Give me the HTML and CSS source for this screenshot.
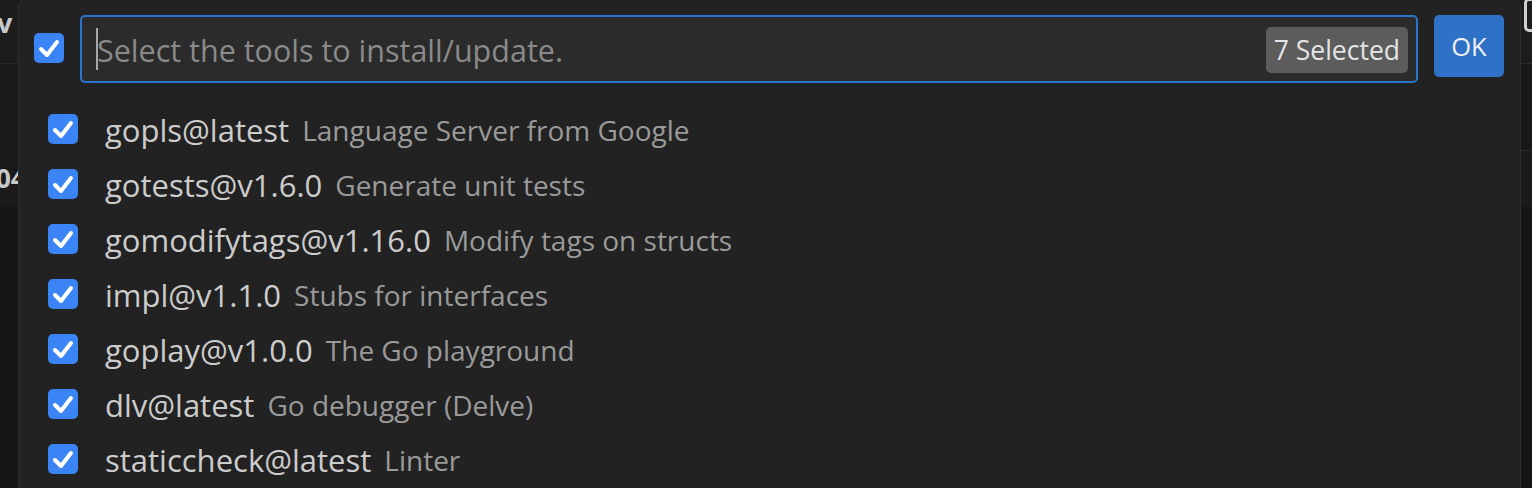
FILE: index.html
```html
<!DOCTYPE html>
<html>
<head>
<meta charset="utf-8">
<link rel="stylesheet" href="styles.css">
</head>
<body>
<div class="page">
  <div class="side side-left">
    <div class="side-top"><span class="frag-v">v</span></div>
    <div class="side-mid"><span class="frag-num">04</span></div>
    <div class="side-bottom"></div>
  </div>

  <div class="quick-pick">
    <div class="header">
      <span class="checkbox header-check">
        <svg viewBox="0 0 30 30"><path d="M7 16 L13 22 L23 9"/></svg>
      </span>
      <div class="input-box">
        <span class="caret"></span>
        <span class="placeholder">Select the tools to install/update.</span>
        <span class="badge">7 Selected</span>
      </div>
      <button class="ok">OK</button>
    </div>

    <ul class="list">
      <li class="row">
        <span class="checkbox"><svg viewBox="0 0 30 30"><path d="M7 16 L13 22 L23 9"/></svg></span>
        <span class="label">gopls@latest</span>
        <span class="desc">Language Server from Google</span>
      </li>
      <li class="row">
        <span class="checkbox"><svg viewBox="0 0 30 30"><path d="M7 16 L13 22 L23 9"/></svg></span>
        <span class="label">gotests@v1.6.0</span>
        <span class="desc">Generate unit tests</span>
      </li>
      <li class="row">
        <span class="checkbox"><svg viewBox="0 0 30 30"><path d="M7 16 L13 22 L23 9"/></svg></span>
        <span class="label">gomodifytags@v1.16.0</span>
        <span class="desc">Modify tags on structs</span>
      </li>
      <li class="row">
        <span class="checkbox"><svg viewBox="0 0 30 30"><path d="M7 16 L13 22 L23 9"/></svg></span>
        <span class="label">impl@v1.1.0</span>
        <span class="desc">Stubs for interfaces</span>
      </li>
      <li class="row">
        <span class="checkbox"><svg viewBox="0 0 30 30"><path d="M7 16 L13 22 L23 9"/></svg></span>
        <span class="label">goplay@v1.0.0</span>
        <span class="desc">The Go playground</span>
      </li>
      <li class="row">
        <span class="checkbox"><svg viewBox="0 0 30 30"><path d="M7 16 L13 22 L23 9"/></svg></span>
        <span class="label">dlv@latest</span>
        <span class="desc">Go debugger (Delve)</span>
      </li>
      <li class="row">
        <span class="checkbox"><svg viewBox="0 0 30 30"><path d="M7 16 L13 22 L23 9"/></svg></span>
        <span class="label">staticcheck@latest</span>
        <span class="desc">Linter</span>
      </li>
    </ul>
  </div>

  <div class="side side-right">
    <div class="side-top"><span class="frag-box"></span></div>
    <div class="side-mid2"></div>
    <div class="side-mid3"></div>
    <div class="side-bottom"></div>
  </div>
</div>
</body>
</html>
```

FILE: styles.css
```css
* { box-sizing: border-box; }
html, body {
  margin: 0;
  padding: 0;
  background: #181818;
  overflow: hidden;
}
body {
  width: 1532px;
  height: 488px;
  font-family: "Open Sans", "Noto Sans", sans-serif;
}
.page {
  display: flex;
  width: 1532px;
  height: 488px;
  overflow: hidden;
}

/* side strips behind the widget */
.side {
  display: flex;
  flex-direction: column;
  overflow: hidden;
}
.side-left { width: 18px; }
.side-right { width: 11px; }
.side-top {
  height: 64px;
  background: #1c1c1c;
  border-bottom: 1px solid #2a2a2a;
}
.side-mid {
  height: 143px;
  background: #1a1a1a;
  padding-top: 100px;
}
.side-mid2 {
  height: 87px;
  background: #181818;
  border-bottom: 1px solid #2a2a2a;
}
.side-mid3 {
  height: 56px;
  background: #1b1b1b;
}
.side-bottom {
  flex: 1;
  background: #151515;
}
.frag-v {
  display: block;
  color: #c8c8c8;
  font-size: 27px;
  font-weight: 700;
  line-height: 27px;
  margin-top: 9px;
  margin-left: -3px;
}
.frag-num {
  display: block;
  color: #c8c8c8;
  font-size: 26px;
  font-weight: 700;
  line-height: 28px;
  margin-left: -4px;
  white-space: nowrap;
}
.frag-box {
  display: block;
  width: 16px;
  height: 34px;
  margin-left: 3px;
  margin-top: -2px;
  border: 3px solid #d0d0d0;
  border-radius: 5px;
}

/* quick pick widget */
.quick-pick {
  width: 1503px;
  height: 500px;
  background: #222222;
  border: 1px solid #2e2e2e;
  border-radius: 8px 8px 0 0;
  margin-top: -2px;
  padding: 16px 16px 0 15px;
}
.header {
  display: flex;
  align-items: center;
  height: 68px;
}
.checkbox {
  flex: none;
  width: 30px;
  height: 30px;
  border-radius: 5px;
  background: #3b84f5;
  display: flex;
}
.checkbox svg {
  width: 30px;
  height: 30px;
  fill: none;
  stroke: #ffffff;
  stroke-width: 4;
  stroke-linecap: round;
  stroke-linejoin: round;
}
.header-check {
  margin-right: 16px;
  margin-top: -2px;
}
.input-box {
  flex: none;
  width: 1338px;
  height: 68px;
  background: #2b2b2b;
  border: 2px solid #2a75cc;
  border-radius: 5px;
  display: flex;
  align-items: center;
  padding: 0 8px 0 14px;
}
.caret {
  width: 2px;
  height: 42px;
  background: #a8a8a8;
  margin-right: -1px;
}
.placeholder {
  flex: 1;
  color: #8a8a8a;
  font-size: 30.5px;
  white-space: nowrap;
  margin-top: 2px;
}
.badge {
  background: #5c5c5c;
  color: #e4e4e4;
  border-radius: 5px;
  font-size: 26.5px;
  height: 46px;
  line-height: 46px;
  padding: 0 8px;
  margin-top: 2px;
}
.ok {
  flex: none;
  margin-left: 16px;
  width: 70px;
  height: 62px;
  margin-top: -6px;
  background: #2f71c6;
  border: none;
  border-radius: 5px;
  color: #f0f0f0;
  font-family: "Open Sans", "Noto Sans", sans-serif;
  font-size: 25.5px;
  padding: 0;
}

.list {
  list-style: none;
  margin: 0;
  padding: 19px 0 0 14px;
}
.row {
  display: flex;
  align-items: center;
  height: 55px;
}
.row .checkbox {
  margin-right: 27px;
  margin-top: -2px;
}
.label {
  color: #cccccc;
  font-size: 31px;
  white-space: nowrap;
  margin-top: 1px;
}
.desc {
  color: #9a9a9a;
  font-size: 28px;
  margin-left: 13px;
  white-space: nowrap;
  margin-top: 1px;
}
```
